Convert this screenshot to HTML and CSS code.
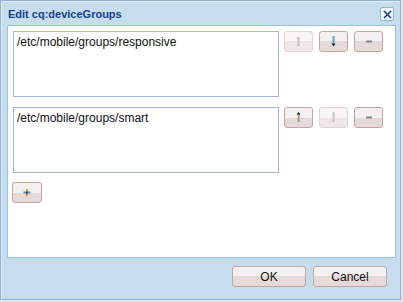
FILE: index.html
```html
<!DOCTYPE html>
<html lang="en">
<head>
  <meta charset="UTF-8">
  <title>Edit cq:deviceGroups</title>
  <link rel="stylesheet" href="styles.css">
</head>
<body>

  <div class="dialog">
    <div class="dialog-header">
      <span class="dialog-title">Edit cq:deviceGroups</span>
      <button class="close-btn" type="button">
        <svg width="11" height="11" viewBox="0 0 11 11"><path d="M2 2 L9 9 M9 2 L2 9" stroke="#15428b" stroke-width="1.6"/></svg>
      </button>
    </div>

    <div class="dialog-body">
      <div class="group-row">
        <textarea class="group-field" readonly>/etc/mobile/groups/responsive</textarea>
        <div class="group-tools">
          <button class="tool-btn disabled" type="button">
            <svg width="27" height="19" viewBox="0 0 27 19"><path d="M13.5 5 L13.5 14" stroke="#c4c4c4" stroke-width="2"/><path d="M11.5 7 L13.5 4.5 L15.5 7 Z" fill="#c4c4c4"/></svg>
          </button>
          <button class="tool-btn" type="button">
            <svg width="27" height="19" viewBox="0 0 27 19"><path d="M13.5 4 L13.5 12" stroke="#6c9fd6" stroke-width="2"/><path d="M11.5 11.5 L15.5 11.5 L13.5 14.5 Z" fill="#222"/></svg>
          </button>
          <button class="tool-btn" type="button">
            <svg width="27" height="19" viewBox="0 0 27 19"><rect x="11" y="8.5" width="6" height="2" fill="#7a8797"/></svg>
          </button>
        </div>
      </div>

      <div class="group-row">
        <textarea class="group-field" readonly>/etc/mobile/groups/smart</textarea>
        <div class="group-tools">
          <button class="tool-btn" type="button">
            <svg width="27" height="19" viewBox="0 0 27 19"><path d="M13.5 6 L13.5 14" stroke="#e8a040" stroke-width="2"/><path d="M14 6 L14 14" stroke="#6c9fd6" stroke-width="1"/><path d="M11.5 6.5 L13.5 4 L15.5 6.5 Z" fill="#222"/></svg>
          </button>
          <button class="tool-btn disabled" type="button">
            <svg width="27" height="19" viewBox="0 0 27 19"><path d="M13.5 4 L13.5 13" stroke="#c4c4c4" stroke-width="2"/><path d="M11.5 12 L15.5 12 L13.5 14.5 Z" fill="#c4c4c4"/></svg>
          </button>
          <button class="tool-btn" type="button">
            <svg width="27" height="19" viewBox="0 0 27 19"><rect x="11" y="8.5" width="6" height="2" fill="#7a8797"/></svg>
          </button>
        </div>
      </div>

      <button class="tool-btn add-btn" type="button">
        <svg width="28" height="19" viewBox="0 0 28 19"><path d="M14 6 L14 13" stroke="#e39a3a" stroke-width="2"/><path d="M10.5 9.5 L17.5 9.5" stroke="#5f8fc7" stroke-width="2"/><rect x="13" y="8.5" width="2" height="2" fill="#3b4a5a"/></svg>
      </button>
    </div>

    <div class="dialog-footer">
      <button class="footer-btn" type="button">OK</button>
      <button class="footer-btn" type="button">Cancel</button>
    </div>
  </div>

</body>
</html>
```

FILE: styles.css
```css
body {
  margin: 0;
  background-color: #e4e4e4;
  font-family: 'Liberation Sans', Arial, sans-serif;
}

.dialog {
  width: 399px;
  height: 298px;
  background-color: #c6ddee;
  border: 1px solid #8fb3d6;
  box-shadow: inset 1px 1px 0 #e3eff8;
}

.dialog-header {
  display: flex;
  justify-content: space-between;
  align-items: flex-start;
  height: 24px;
}

.dialog-title {
  font-family: 'Liberation Sans', Arial, sans-serif;
  font-weight: bold;
  font-size: 11px;
  color: #15428b;
  padding: 7px 0 0 7px;
}

.close-btn {
  width: 14px;
  height: 14px;
  margin: 6px 6px 0 0;
  padding: 0;
  display: flex;
  align-items: center;
  justify-content: center;
  background-color: #f4f9fd;
  border: 1px solid #8fb3d6;
  border-radius: 2px;
}

.dialog-body {
  box-sizing: border-box;
  width: 389px;
  height: 233px;
  margin-left: 6px;
  padding: 5px 5px;
  background-color: #fff;
  border: 1px solid #99c4ea;
}

.group-row {
  display: flex;
  gap: 5px;
  margin-bottom: 10px;
}

.group-field {
  box-sizing: border-box;
  width: 266px;
  height: 66px;
  margin: 0;
  padding: 3px 3px;
  border: 1px solid #a9b6dc;
  font-family: 'Liberation Sans', Arial, sans-serif;
  font-size: 12px;
  color: #111;
  resize: none;
  outline: none;
}

.group-tools {
  display: flex;
  gap: 6px;
}

.tool-btn {
  box-sizing: border-box;
  width: 29px;
  height: 21px;
  padding: 0;
  display: flex;
  border: 1px solid #c7a4a4;
  border-radius: 3px;
  background: linear-gradient(#f4f0f0 0, #f4f0f0 50%, #e6d9d9 50%, #e6d9d9 100%);
}

.tool-btn.disabled {
  border-color: #e2d3d3;
  background: linear-gradient(#f8f5f5 0, #f8f5f5 50%, #efe7e7 50%, #efe7e7 100%);
}

.add-btn {
  width: 30px;
  margin: -1px 0 0 -1px;
}

.dialog-footer {
  display: flex;
  justify-content: flex-end;
  gap: 7px;
  padding: 8px 13px 0 0;
}

.footer-btn {
  box-sizing: border-box;
  width: 74px;
  height: 21px;
  padding: 0;
  border: 1px solid #c7a4a4;
  border-radius: 3px;
  background: linear-gradient(#f4f0f0 0, #f4f0f0 50%, #e6d9d9 50%, #e6d9d9 100%);
  font-family: 'Liberation Sans', Arial, sans-serif;
  font-size: 12px;
  color: #111;
}
```
